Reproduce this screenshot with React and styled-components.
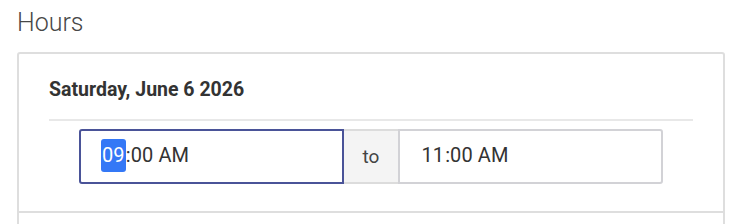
import React from "react";
import styled, { createGlobalStyle } from "styled-components";

const Global = createGlobalStyle`
  html, body { margin: 0; padding: 0; background: #fff; }
  body { font-family: Roboto, "Noto Sans", Arial, sans-serif; overflow: hidden; }
`;

const Page = styled.div`
  padding: 0 15px 0 17px;
`;

const Title = styled.h2`
  margin: 0;
  padding-top: 9px;
  font-size: 25px;
  line-height: 28px;
  font-weight: 300;
  color: #474747;
`;

const Card = styled.div`
  margin-top: 15px;
  border: 2px solid #dedede;
  border-radius: 3px;
`;

const Day = styled.section`
  padding: 24px 30px 27px;
  border-bottom: 2px solid #dedede;
`;

const More = styled.div`
  height: 40px;
`;

const DayTitle = styled.h3`
  margin: 0 0 17px;
  font-size: 19.5px;
  line-height: 24px;
  font-weight: 700;
  color: #333;
`;

const Rule = styled.div`
  height: 2px;
  background: #e8e8e8;
  margin-bottom: 8px;
`;

const Group = styled.div`
  display: flex;
  height: 55px;
  margin: 0 30px;
`;

const TimeBox = styled.div`
  flex: 1;
  display: flex;
  align-items: center;
  padding: 0 20px 3px;
  border: 2px solid ${(p) => (p.$focused ? "#4a5398" : "#d2d2d6")};
  border-radius: ${(p) => (p.$side === "left" ? "3px 0 0 3px" : "0 3px 3px 0")};
  font-size: 20px;
  line-height: 33px;
  letter-spacing: 0.1px;
  color: #333;
  background: #fff;
`;

const Seg = styled.span`
  display: inline-block;
  padding: 0 1px;
  border-radius: 3px;
  background: ${(p) => (p.$selected ? "#3478f6" : "transparent")};
  color: ${(p) => (p.$selected ? "#fff" : "inherit")};
`;

const Addon = styled.div`
  display: flex;
  align-items: center;
  padding: 0 19px;
  background: #f4f4f4;
  border-top: 2px solid #dcdcdc;
  border-bottom: 2px solid #dcdcdc;
  font-size: 19px;
  color: #444;
`;

const Time = ({ h, m, ap, selected }) => (
  <>
    <Seg $selected={selected}>{h}</Seg>
    <span>:{m}</span>
    <span>&nbsp;{ap}</span>
  </>
);

export default function App() {
  return (
    <Page>
      <Global />
      <Title>Hours</Title>
      <Card>
        <Day>
          <DayTitle>Saturday, June 6 2026</DayTitle>
          <Rule />
          <Group>
            <TimeBox $side="left" $focused>
              <Time h="09" m="00" ap="AM" selected />
            </TimeBox>
            <Addon>to</Addon>
            <TimeBox $side="right">
              <Time h="11" m="00" ap="AM" />
            </TimeBox>
          </Group>
        </Day>
        <More />
      </Card>
    </Page>
  );
}
